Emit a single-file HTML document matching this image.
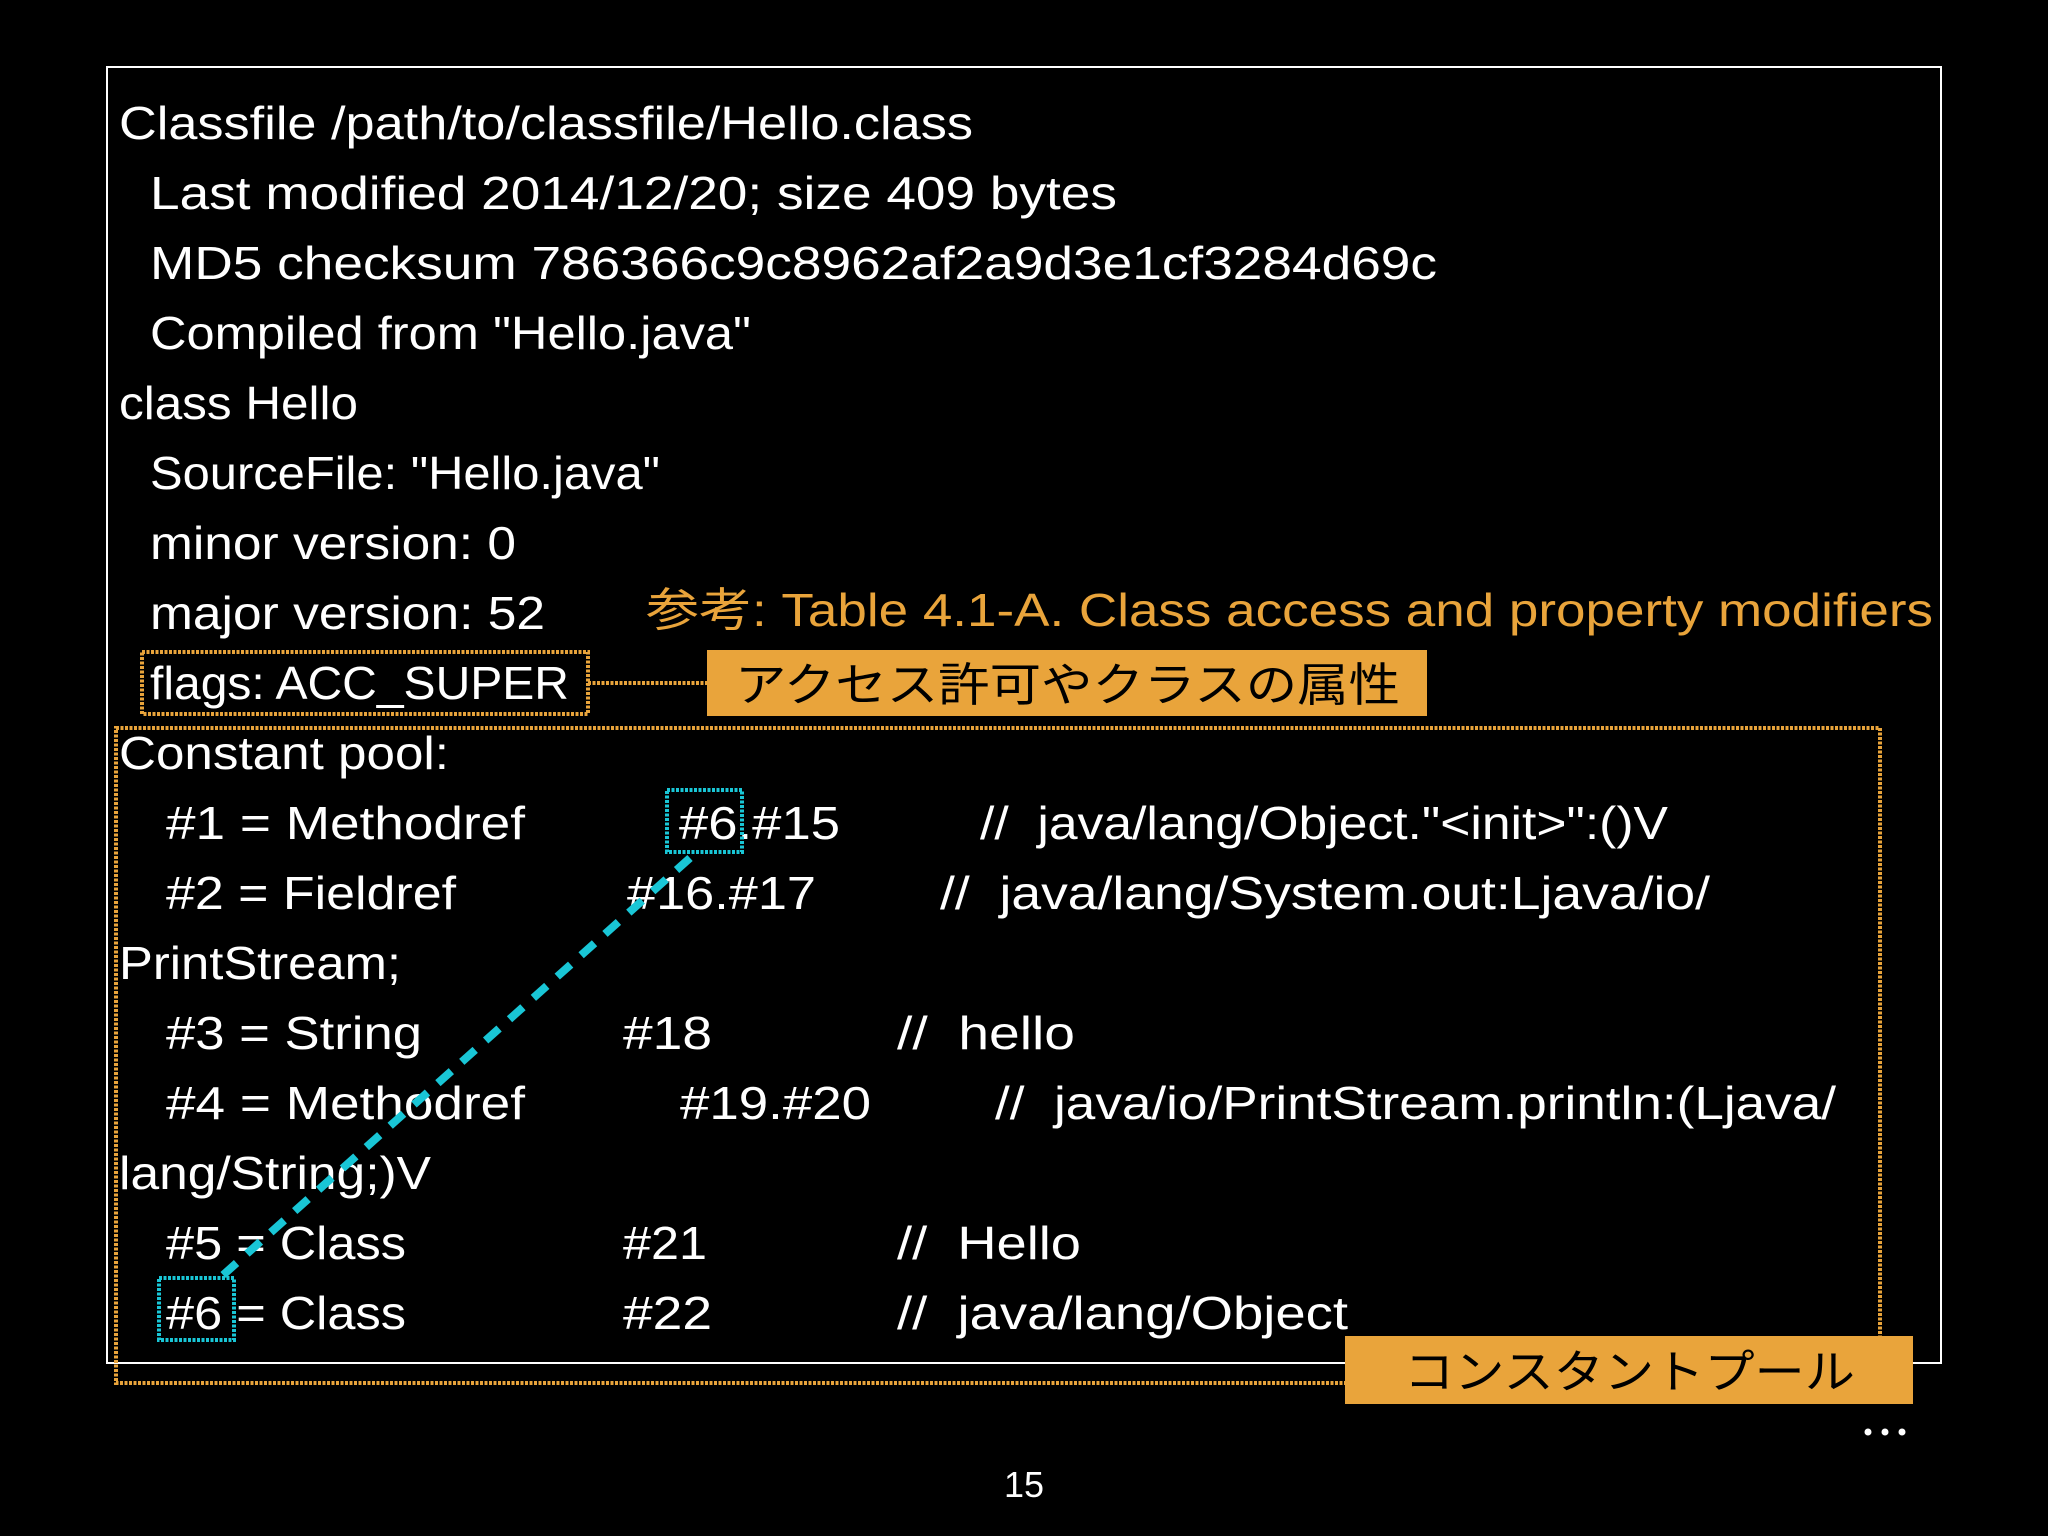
<!DOCTYPE html>
<html><head><meta charset="utf-8"><style>
html,body{margin:0;padding:0;background:#000;}
svg{display:block}
text{font-family:"Liberation Sans","Noto Sans CJK JP",sans-serif;font-size:46px;fill:#fff}
.o{fill:#e9a43b}
.k{fill:#000}
</style></head><body>
<svg width="2048" height="1536" viewBox="0 0 2048 1536" xmlns="http://www.w3.org/2000/svg">
<rect x="0" y="0" width="2048" height="1536" fill="#000"/>
<rect x="107" y="67" width="1834" height="1296" fill="none" stroke="#fff" stroke-width="2"/>

<text x="119" y="139" textLength="854" lengthAdjust="spacingAndGlyphs">Classfile /path/to/classfile/Hello.class</text>
<text x="150" y="209" textLength="967" lengthAdjust="spacingAndGlyphs">Last modified 2014/12/20; size 409 bytes</text>
<text x="150" y="279" textLength="1287" lengthAdjust="spacingAndGlyphs">MD5 checksum 786366c9c8962af2a9d3e1cf3284d69c</text>
<text x="150" y="349" textLength="601" lengthAdjust="spacingAndGlyphs">Compiled from "Hello.java"</text>
<text x="119" y="419" textLength="239" lengthAdjust="spacingAndGlyphs">class Hello</text>
<text x="150" y="489" textLength="510" lengthAdjust="spacingAndGlyphs">SourceFile: "Hello.java"</text>
<text x="150" y="559" textLength="366" lengthAdjust="spacingAndGlyphs">minor version: 0</text>
<text x="150" y="629" textLength="395" lengthAdjust="spacingAndGlyphs">major version: 52</text>
<text x="150" y="699" textLength="419" lengthAdjust="spacingAndGlyphs">flags: ACC_SUPER</text>
<text x="119" y="769" textLength="330" lengthAdjust="spacingAndGlyphs">Constant pool:</text>

<text x="166" y="839" textLength="359" lengthAdjust="spacingAndGlyphs">#1 = Methodref</text>
<text x="679" y="839" textLength="161" lengthAdjust="spacingAndGlyphs">#6.#15</text>
<text x="980" y="839" textLength="688" lengthAdjust="spacingAndGlyphs">//&#160;&#160;java/lang/Object."&lt;init&gt;":()V</text>

<text x="166" y="909" textLength="290" lengthAdjust="spacingAndGlyphs">#2 = Fieldref</text>
<text x="627" y="909" textLength="189" lengthAdjust="spacingAndGlyphs">#16.#17</text>
<text x="940" y="909" textLength="770" lengthAdjust="spacingAndGlyphs">//&#160;&#160;java/lang/System.out:Ljava/io/</text>
<text x="119" y="979" textLength="282" lengthAdjust="spacingAndGlyphs">PrintStream;</text>

<text x="166" y="1049" textLength="256" lengthAdjust="spacingAndGlyphs">#3 = String</text>
<text x="623" y="1049" textLength="89" lengthAdjust="spacingAndGlyphs">#18</text>
<text x="897" y="1049" textLength="178" lengthAdjust="spacingAndGlyphs">//&#160;&#160;hello</text>

<text x="166" y="1119" textLength="359" lengthAdjust="spacingAndGlyphs">#4 = Methodref</text>
<text x="680" y="1119" textLength="191" lengthAdjust="spacingAndGlyphs">#19.#20</text>
<text x="995" y="1119" textLength="841" lengthAdjust="spacingAndGlyphs">//&#160;&#160;java/io/PrintStream.println:(Ljava/</text>
<text x="119" y="1189" textLength="312" lengthAdjust="spacingAndGlyphs">lang/String;)V</text>

<text x="166" y="1259" textLength="240" lengthAdjust="spacingAndGlyphs">#5 = Class</text>
<text x="623" y="1259" textLength="84" lengthAdjust="spacingAndGlyphs">#21</text>
<text x="897" y="1259" textLength="184" lengthAdjust="spacingAndGlyphs">//&#160;&#160;Hello</text>

<text x="166" y="1329" textLength="240" lengthAdjust="spacingAndGlyphs">#6 = Class</text>
<text x="623" y="1329" textLength="89" lengthAdjust="spacingAndGlyphs">#22</text>
<text x="897" y="1329" textLength="451" lengthAdjust="spacingAndGlyphs">//&#160;&#160;java/lang/Object</text>

<text class="o" x="646" y="626" textLength="1287" lengthAdjust="spacingAndGlyphs">参考: Table 4.1-A. Class access and property modifiers</text>

<rect x="142" y="652" width="446" height="62" fill="none" stroke="#e9a43b" stroke-width="4" stroke-dasharray="3 1.5"/>
<line x1="588" y1="683" x2="707" y2="683" stroke="#e9a43b" stroke-width="4" stroke-dasharray="3 1.5"/>
<rect x="707" y="650" width="720" height="66" fill="#e9a43b"/>
<text class="k" x="735" y="701" textLength="665" lengthAdjust="spacingAndGlyphs">アクセス許可やクラスの属性</text>

<rect x="116" y="728" width="1764" height="655" fill="none" stroke="#e9a43b" stroke-width="4" stroke-dasharray="3 1.5"/>
<rect x="1345" y="1336" width="568" height="68" fill="#e9a43b"/>
<text class="k" x="1404" y="1388" textLength="451" lengthAdjust="spacingAndGlyphs">コンスタントプール</text>

<rect x="667" y="790" width="75" height="62" fill="none" stroke="#19c6d6" stroke-width="4" stroke-dasharray="3 1.5"/>
<rect x="159" y="1278" width="75" height="62" fill="none" stroke="#19c6d6" stroke-width="4" stroke-dasharray="3 1.5"/>
<line x1="690" y1="858" x2="222" y2="1276" stroke="#19c6d6" stroke-width="8" stroke-dasharray="18 14"/>

<circle cx="1868" cy="1432" r="3.5" fill="#fff"/>
<circle cx="1885" cy="1432" r="3.5" fill="#fff"/>
<circle cx="1902" cy="1432" r="3.5" fill="#fff"/>
<text x="1024" y="1497" text-anchor="middle" style="font-size:36px">15</text>
</svg>
</body></html>
